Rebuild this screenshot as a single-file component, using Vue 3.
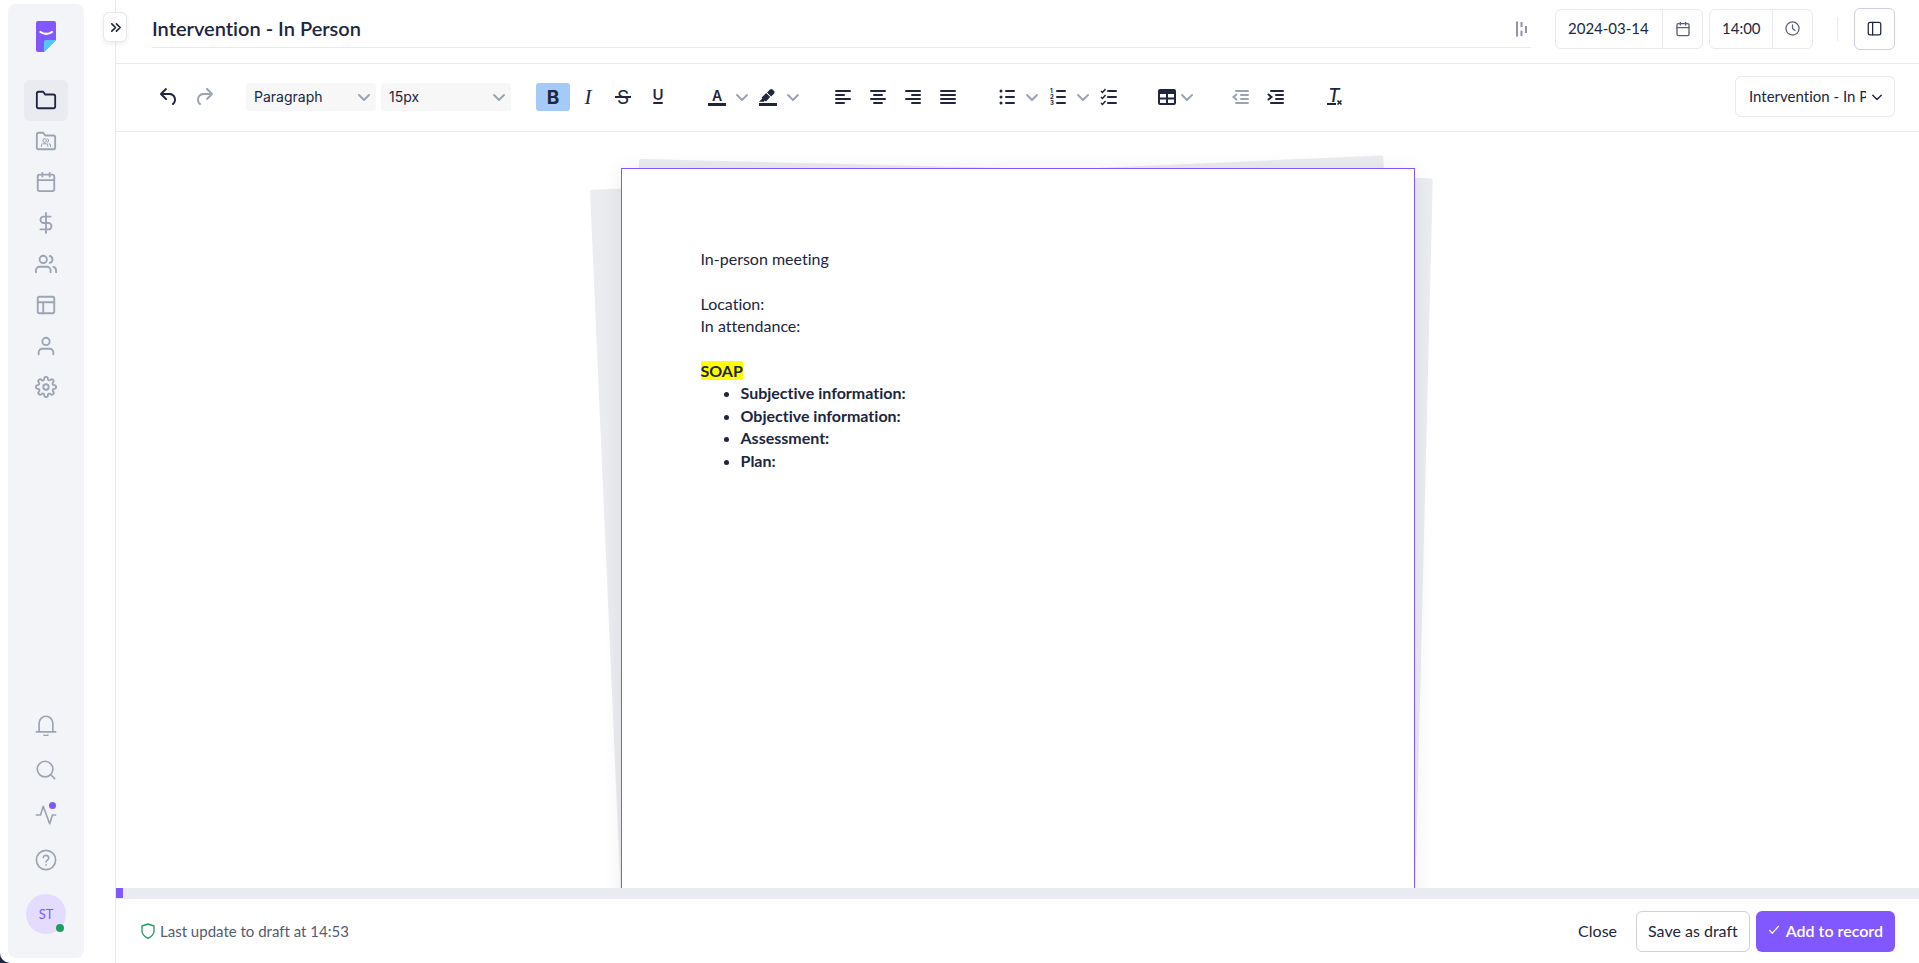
<script setup>
import { h, ref } from 'vue'

const bar = (x, y, w) => `<path d="M${x} ${y}h${w}" />`
const rows = (list) => `<g fill="none" stroke="currentColor" stroke-width="2" stroke-linecap="round">${list.map((r) => bar(...r)).join('')}</g>`

const icons = {
  folder: '<path d="M22 19a2 2 0 0 1-2 2H4a2 2 0 0 1-2-2V5a2 2 0 0 1 2-2h5l2 3h9a2 2 0 0 1 2 2z"/>',
  team: '<path d="M22 19a2 2 0 0 1-2 2H4a2 2 0 0 1-2-2V5a2 2 0 0 1 2-2h5l2 3h9a2 2 0 0 1 2 2z"/><g stroke-width="1.1"><circle cx="10.5" cy="11.5" r="1.9"/><path d="M7 18v-1a2 2 0 0 1 2-2h3a2 2 0 0 1 2 2v1M13.5 9.7a1.9 1.9 0 0 1 0 3.6M15.400 15a2 2 0 0 1 1.600 2v1"/></g>',
  calendar: '<rect x="3" y="4" width="18" height="18" rx="2"/><path d="M16 2v4M8 2v4M3 10h18"/>',
  dollar: '<path d="M12 1v22M17 5H9.500a3.500 3.500 0 0 0 0 7h5a3.500 3.500 0 0 1 0 7H6"/>',
  users: '<path d="M17 21v-2a4 4 0 0 0-4-4H5a4 4 0 0 0-4 4v2"/><circle cx="9" cy="7" r="4"/><path d="M23 21v-2a4 4 0 0 0-3-3.870M16 3.130a4 4 0 0 1 0 7.750"/>',
  layout: '<rect x="3" y="3" width="18" height="18" rx="2"/><path d="M3 9h18M9 21V9"/>',
  user: '<path d="M20 21v-2a4 4 0 0 0-4-4H8a4 4 0 0 0-4 4v2"/><circle cx="12" cy="7" r="4"/>',
  gear: '<circle cx="12" cy="12" r="3"/><path d="M19.400 15a1.650 1.650 0 0 0 .33 1.820l.06.06a2 2 0 0 1-2.830 2.830l-.06-.06a1.650 1.650 0 0 0-2.800 1.180V21a2 2 0 0 1-4 0v-.09A1.650 1.650 0 0 0 7.180 19.730l-.06.06a2 2 0 0 1-2.830-2.830l.06-.06A1.650 1.650 0 0 0 3.090 14H3a2 2 0 0 1 0-4h.09A1.650 1.650 0 0 0 4.270 7.180l-.06-.06a2 2 0 0 1 2.830-2.830l.06.06A1.650 1.650 0 0 0 10 3.090V3a2 2 0 0 1 4 0v.09a1.650 1.650 0 0 0 2.820 1.180l.06-.06a2 2 0 0 1 2.830 2.830l-.06.06A1.650 1.650 0 0 0 20.910 10H21a2 2 0 0 1 0 4h-.09a1.650 1.650 0 0 0-1.510 1z"/>',
  bell: '<path d="M1.500 19.500h21M4.500 19.500V10a7.500 7.500 0 0 1 15 0v9.500M10 23c1 .7 3 .7 4 0"/>',
  search: '<circle cx="11" cy="11" r="8.500"/><path d="m21.500 21.500-4.300-4.300"/>',
  activity: '<path d="M22.500 12H19l-3 9.500L9 2.500 6 12H1.500"/>',
  help: '<circle cx="12" cy="12" r="10.500"/><path d="M9 9.200a3 3 0 0 1 5.900 1c0 2-2.900 2.400-2.900 4M12 17.300v.2"/>',
  chevron: '<path d="m2 5 5 5 5-5"/>',
  double: '<path d="m3 3 4 4-4 4M8 3l4 4-4 4"/>',
  clock: '<circle cx="12" cy="12" r="10.500"/><path d="M12 6v6l4 3"/>',
  panel: '<rect x="2" y="2" width="20" height="20" rx="3"/><path d="M9 2v20"/>',
  shield: '<path d="M12 1.500 21 4.500v8c0 5-4 8-9 10.500-5-2.500-9-5.500-9-10.500v-8z"/>',
  check: '<path d="m2 8 3.500 3.500L13 3"/>'
}

const glyphs = {
  undo: '<path d="M6.400 8H12c3.700 0 6.200 2 6.800 5.100.6 2.700-.4 5.600-2.300 6.800a1 1 0 0 1-1-1.800c1.100-.6 1.800-2.700 1.400-4.600-.5-2.100-2.100-3.500-4.900-3.500H6.400l3.300 3.300a1 1 0 1 1-1.400 1.400l-5-5a1 1 0 0 1 0-1.400l5-5a1 1 0 0 1 1.400 1.400L6.400 8Z"/>',
  redo: '<path d="M17.600 10H12c-2.800 0-4.400 1.400-4.900 3.500-.4 2 .3 4 1.400 4.600a1 1 0 1 1-1 1.800c-2-1.200-2.900-4.100-2.300-6.800.6-3 3-5.100 6.800-5.100h5.600l-3.300-3.300a1 1 0 1 1 1.400-1.400l5 5a1 1 0 0 1 0 1.400l-5 5a1 1 0 0 1-1.400-1.400l3.300-3.300Z"/>',
  bold: '<text x="12" y="19" text-anchor="middle" font-family="Inter, sans-serif" font-size="19" font-weight="700">B</text>',
  italic: '<text x="12" y="19" text-anchor="middle" font-family="Liberation Serif, serif" font-size="21" font-style="italic">I</text>',
  strike: '<text x="12" y="19" text-anchor="middle" font-family="Inter, sans-serif" font-size="19">S</text><path d="M4 11h16v2H4z"/>',
  underline: '<text x="12" y="15" text-anchor="middle" font-family="Inter, sans-serif" font-size="15" font-weight="600">U</text><rect x="7" y="17" width="10" height="2" rx="1"/>',
  color: '<text x="12" y="16" text-anchor="middle" font-family="Inter, sans-serif" font-size="14" font-weight="600">A</text><path d="M3 18h18v3H3z"/>',
  marker: '<path d="M3 18h18v3H3zM7.700 16.700H3l3.300-3.300-.7-.8L10.200 8l4 4.100-4 4.200c-.2.200-.6.200-.8 0l-.6-.7-1.100 1.100zm5-7.500L11 7.400l3-2.900a2 2 0 0 1 2.600 0L18 6c.7.700.7 2 0 2.700l-2.900 2.900-1.800-1.800-.5-.6"/>',
  left: rows([[5, 6, 14], [5, 10, 8], [5, 14, 14], [5, 18, 8]]),
  center: rows([[5, 6, 14], [8, 10, 8], [5, 14, 14], [8, 18, 8]]),
  right: rows([[5, 6, 14], [11, 10, 8], [5, 14, 14], [11, 18, 8]]),
  justify: rows([[5, 6, 14], [5, 10, 14], [5, 14, 14], [5, 18, 14]]),
  bullets: rows([[11, 6, 8], [11, 12, 8], [11, 18, 8]]) + '<circle cx="6" cy="6" r="1.500"/><circle cx="6" cy="12" r="1.500"/><circle cx="6" cy="18" r="1.500"/>',
  numbers: rows([[11, 6, 8], [11, 12, 8], [11, 18, 8]]) + '<g font-family="Inter, sans-serif" font-size="6" font-weight="700"><text x="4" y="8">1</text><text x="4" y="14">2</text><text x="4" y="20">3</text></g>',
  checks: rows([[11, 6, 8], [11, 12, 8], [11, 18, 8]]) + '<path d="m4 6 1.500 1.500L8.500 4M4 12l1.500 1.500L8.500 10M4 18l1.500 1.500L8.500 16" fill="none" stroke="currentColor" stroke-width="1.500"/>',
  table: '<path fill-rule="evenodd" d="M5 4h14a2 2 0 0 1 2 2v12a2 2 0 0 1-2 2H5a2 2 0 0 1-2-2V6c0-1.100.9-2 2-2ZM5 9v3.500h6V9ZM13 9v3.500h6V9ZM5 14.500V18h6v-3.500ZM13 14.500V18h6v-3.500Z"/>',
  outdent: rows([[7, 6, 12], [12, 10, 7], [12, 14, 7], [7, 18, 12]]) + '<path d="M7.500 9.500 4.500 12l3 2.500" fill="none" stroke="currentColor" stroke-width="2" stroke-linecap="round"/>',
  indent: rows([[7, 6, 12], [12, 10, 7], [12, 14, 7], [7, 18, 12]]) + '<path d="m4.500 9.500 3 2.500-3 2.500" fill="none" stroke="currentColor" stroke-width="2" stroke-linecap="round"/>',
  clear: '<text x="5" y="17" font-family="Inter, sans-serif" font-size="18" font-style="italic" font-weight="500">T</text><path d="M4 18h9v2H4z"/><path d="m14.500 15.500 4 4m0-4-4 4" fill="none" stroke="currentColor" stroke-width="1.600"/>'
}

const Icon = (props) =>
  h('svg', {
    class: 'icon',
    viewBox: `0 0 ${props.box || 24} ${props.box || 24}`,
    width: props.size || 22,
    height: props.size || 22,
    'stroke-width': props.weight || 2,
    'aria-hidden': 'true',
    innerHTML: icons[props.name]
  })
Icon.props = ['name', 'size', 'box', 'weight']

const Glyph = (props) =>
  h('svg', { class: 'glyph', viewBox: '0 0 24 24', width: 24, height: 24, 'aria-hidden': 'true', innerHTML: glyphs[props.name] })
Glyph.props = ['name']

const nav = [
  ['folder', 'Records'], ['team', 'Shared records'], ['calendar', 'Calendar'], ['dollar', 'Billing'],
  ['users', 'Contacts'], ['layout', 'Templates'], ['user', 'Profile'], ['gear', 'Settings']
]
const tools = [['bell', 'Notifications'], ['search', 'Search'], ['activity', 'Activity'], ['help', 'Help']]

const groups = [
  [['bold', 'Bold'], ['italic', 'Italic'], ['strike', 'Strikethrough'], ['underline', 'Underline']],
  [['color', 'Text color', true], ['marker', 'Highlight color', true]],
  [['left', 'Align left'], ['center', 'Align center'], ['right', 'Align right'], ['justify', 'Justify']],
  [['bullets', 'Bullet list', true], ['numbers', 'Numbered list', true], ['checks', 'Checklist']],
  [['table', 'Table', true]],
  [['outdent', 'Decrease indent'], ['indent', 'Increase indent']],
  [['clear', 'Clear formatting']]
]

const title = ref('Intervention - In Person')
const date = ref('2024-03-14')
const time = ref('14:00')
const progress = ref(7)
const fields = ['Subjective information:', 'Objective information:', 'Assessment:', 'Plan:']
</script>

<template>
  <div class="app">
    <aside class="rail">
      <nav class="sidebar" aria-label="Main">
        <a href="#" class="logo" aria-label="Home">
          <svg width="20" height="31" viewBox="0 0 20 31" aria-hidden="true">
            <path d="M2 0h16a2 2 0 0 1 2 2v17L8 31H2a2 2 0 0 1-2-2V2a2 2 0 0 1 2-2z" fill="#8158ff" />
            <path d="M8 31V21a2 2 0 0 1 2-2h10z" fill="#4fc8fa" />
            <path d="M4.500 11c3 2.500 8.500 2.500 11.500 0" fill="none" stroke="#fff" stroke-width="2.200" stroke-linecap="round" />
          </svg>
        </a>
        <a v-for="([name, label], i) in nav" :key="name" href="#" class="nav-item" :class="{ active: i === 0 }" :aria-label="label">
          <Icon :name="name" />
        </a>
        <div class="rail-tools">
          <a v-for="[name, label] in tools" :key="name" href="#" class="tool-item" :aria-label="label">
            <Icon :name="name" weight="1.8" />
            <span v-if="name === 'activity'" class="news"></span>
          </a>
          <button class="avatar" type="button">ST<span class="online"></span></button>
        </div>
      </nav>
    </aside>

    <main class="main">
      <button class="expand" type="button" aria-label="Expand menu"><Icon name="double" size="13" box="14" weight="1.8" /></button>

      <header class="header">
        <div class="title-field">
          <input v-model="title" class="title" aria-label="Title" />
          <svg class="bars" width="12" height="16" viewBox="0 0 12 16" aria-hidden="true">
            <path d="M1 .5v15M5.500 1v5M5.500 9.500v5.500M10 5v7" fill="none" stroke="currentColor" stroke-width="2" />
          </svg>
        </div>
        <div class="picker">
          <input v-model="date" class="date" aria-label="Date" />
          <button type="button" aria-label="Choose date"><Icon name="calendar" size="16" /></button>
        </div>
        <div class="picker">
          <input v-model="time" class="time" aria-label="Time" />
          <button type="button" aria-label="Choose time"><Icon name="clock" size="15" /></button>
        </div>
        <span class="rule"></span>
        <button class="panel" type="button" aria-label="Toggle panel"><Icon name="panel" size="15" /></button>
      </header>

      <div class="toolbar" role="toolbar" aria-label="Formatting">
        <div class="group">
          <button class="tb" type="button" aria-label="Undo"><Glyph name="undo" /></button>
          <button class="tb muted" type="button" aria-label="Redo"><Glyph name="redo" /></button>
        </div>
        <div class="group choices">
          <div class="choice">
            <select aria-label="Block format"><option>Paragraph</option></select>
            <Icon name="chevron" size="14" box="14" />
          </div>
          <div class="choice">
            <select aria-label="Font size"><option>15px</option></select>
            <Icon name="chevron" size="14" box="14" />
          </div>
        </div>
        <div v-for="(group, g) in groups" :key="g" class="group">
          <template v-for="[name, label, menu] in group" :key="name">
            <span v-if="menu" class="split" :class="{ tight: name === 'table' }">
              <button class="tb" type="button" :aria-label="label"><Glyph :name="name" /></button>
              <button class="more" type="button" :aria-label="label + ' options'"><Icon name="chevron" size="14" box="14" /></button>
            </span>
            <button v-else class="tb" :class="{ on: name === 'bold', muted: name === 'outdent' }" type="button" :aria-label="label">
              <Glyph :name="name" />
            </button>
          </template>
        </div>
        <div class="template">
          <select aria-label="Template"><option>Intervention - In Person</option></select>
          <Icon name="chevron" size="12" box="14" weight="1.6" />
        </div>
      </div>

      <section class="canvas">
        <div class="stack">
          <div class="sheet behind tilt-right"></div>
          <div class="sheet behind tilt-left"></div>
          <article class="sheet page" contenteditable="true" spellcheck="false" aria-label="Document">
            <p>In-person meeting</p>
            <p><br /></p>
            <p>Location:</p>
            <p>In attendance:</p>
            <p><br /></p>
            <p><strong><mark>SOAP</mark></strong></p>
            <ul>
              <li v-for="field in fields" :key="field">{{ field }}</li>
            </ul>
          </article>
        </div>
      </section>

      <div class="progress"><div class="done" :style="{ width: progress + 'px' }"></div></div>

      <footer class="footer">
        <Icon name="shield" class="shield" size="16" />
        <span class="status">Last update to draft at 14:53</span>
        <button class="btn plain" type="button">Close</button>
        <button class="btn outline" type="button">Save as draft</button>
        <button class="btn primary" type="button"><Icon name="check" size="12" box="15" weight="1.6" />Add to record</button>
      </footer>
    </main>
  </div>
</template>

<style>
html {
  background: #20263f;
}
</style>

<style scoped>
.app {
  display: flex;
  height: 100vh;
  overflow: hidden;
  background: #fff;
  border-bottom-left-radius: 10px;
  color: #20263f;
  font-family: Lato, "Liberation Sans", sans-serif;
  font-size: 15px;
  font-variant-ligatures: none;
}
button, input, select {
  font: inherit;
  font-variant-ligatures: none;
  color: inherit;
  background: none;
  border: 0;
  margin: 0;
  padding: 0;
  outline: 0;
}
.icon {
  display: block;
  flex: none;
  fill: none;
  stroke: currentColor;
  stroke-linecap: round;
  stroke-linejoin: round;
}
.glyph {
  display: block;
  fill: currentColor;
}
.rail {
  flex: none;
  display: flex;
  width: 115px;
  box-sizing: border-box;
  padding: 4px 31px 5px 8px;
}
.sidebar {
  flex: 1;
  display: flex;
  flex-direction: column;
  align-items: center;
  background: #f2f4f8;
  border-radius: 8px;
}
.logo {
  height: 59px;
  padding-top: 17px;
}
.nav-item, .tool-item {
  position: relative;
  display: flex;
  align-items: center;
  justify-content: center;
  box-sizing: border-box;
  width: 44px;
  height: 41px;
  padding-bottom: 2px;
  border-radius: 6px;
  color: #9ca3b3;
}
.nav-item.active {
  background: #e9ebf0;
  color: #20263f;
}
.rail-tools {
  margin-top: auto;
  display: flex;
  flex-direction: column;
  align-items: center;
  padding-bottom: 24px;
}
.tool-item {
  height: 45px;
  padding: 0;
}
.news {
  position: absolute;
  top: 10px;
  right: 12px;
  width: 7px;
  height: 7px;
  border-radius: 50%;
  background: #8158ff;
}
.avatar {
  position: relative;
  width: 40px;
  height: 40px;
  margin-top: 12px;
  border-radius: 50%;
  background: #e3dcff;
  color: #8158ff;
  font-size: 13px;
}
.online {
  position: absolute;
  right: 2px;
  bottom: 2px;
  width: 8px;
  height: 8px;
  border-radius: 50%;
  background: #1d9f5f;
}
.main {
  position: relative;
  flex: 1;
  min-width: 0;
  display: flex;
  flex-direction: column;
  border-left: 1px solid #e9e9ee;
}
.expand {
  position: absolute;
  left: -13px;
  top: 12px;
  display: grid;
  place-items: center;
  width: 24px;
  height: 30px;
  background: #fff;
  border: 1px solid #e6e8ee;
  border-radius: 6px;
  box-shadow: 0 2px 4px rgba(32, 38, 63, .08);
}
.header {
  flex: none;
  display: flex;
  align-items: center;
  height: 63px;
  box-sizing: border-box;
  padding: 0 24px 6px 36px;
}
.title-field {
  flex: 1;
  display: flex;
  align-items: center;
  align-self: flex-start;
  box-sizing: border-box;
  height: 48px;
  padding: 8px 3px 0 0;
  margin-right: 24px;
  border-bottom: 1px solid #e9e9ee;
}
.title {
  flex: 1;
  min-width: 0;
  font-size: 20px;
  font-weight: 600;
}
.bars {
  margin-top: 2px;
  color: #8f94a6;
}
.picker {
  display: flex;
  height: 40px;
  box-sizing: border-box;
  margin-right: 6px;
  border: 1px solid #e9e9ee;
  border-radius: 6px;
}
.picker input {
  box-sizing: border-box;
  padding: 0 0 2px 12px;
}
.date {
  width: 106px;
}
.time {
  width: 62px;
}
.picker button {
  display: grid;
  place-items: center;
  width: 40px;
  border-left: 1px solid #e9e9ee;
  color: #5a6075;
}
.rule {
  width: 1px;
  height: 24px;
  margin: 0 16px 0 18px;
  background: #e9e9ee;
}
.panel {
  display: grid;
  place-items: center;
  width: 41px;
  height: 42px;
  border: 1px solid #cfd1da;
  border-radius: 6px;
}
.toolbar {
  flex: none;
  display: flex;
  align-items: center;
  gap: 25px;
  height: 69px;
  box-sizing: border-box;
  padding: 0 24px 2px 36px;
  border-top: 1px solid #e9e9ee;
  border-bottom: 1px solid #e9e9ee;
}
.group {
  display: flex;
  gap: 1px;
}
.choices {
  gap: 5px;
}
.tb {
  display: grid;
  place-items: center;
  width: 34px;
  height: 28px;
  border-radius: 3px;
}
.on {
  background: #a6caf7;
}
.muted {
  color: #9ca3b3;
}
.split {
  display: flex;
}
.more {
  display: grid;
  place-items: center;
  width: 16px;
  color: #9ca3b3;
}
.tight .tb {
  width: 32px;
}
.tight .more {
  margin: 0 4px 0 -4px;
}
.choice, .template {
  position: relative;
  display: flex;
  align-items: center;
}
.choice select {
  width: 130px;
  height: 28px;
  padding: 0 26px 0 8px;
  border-radius: 3px;
  background: #f7f7f8;
  font-family: Inter, sans-serif;
  font-size: 14px;
  appearance: none;
}
.choice .icon {
  position: absolute;
  right: 5px;
  color: #9ca3b3;
  pointer-events: none;
}
.template {
  margin-left: auto;
}
.template select {
  width: 160px;
  height: 41px;
  padding: 0 28px 2px 13px;
  border: 1px solid #e9e9ee;
  border-radius: 6px;
  text-overflow: clip;
  appearance: none;
}
.template .icon {
  position: absolute;
  right: 12px;
  pointer-events: none;
}
.canvas {
  flex: 1;
  min-height: 0;
  overflow: hidden;
}
.stack {
  position: relative;
  width: 794px;
  margin: 36px auto 0;
}
.sheet {
  box-sizing: border-box;
  width: 794px;
  min-height: 1123px;
}
.behind {
  position: absolute;
  border-radius: 3px;
  background: #ebecf0;
  transform-origin: 0 0;
}
.tilt-left {
  left: -31px;
  top: 22px;
  transform: rotate(-2.500deg);
}
.tilt-right {
  left: 18px;
  top: -9px;
  transform: rotate(1.400deg);
}
.page {
  position: relative;
  padding: 79px;
  background: #fff;
  border: 1px solid #8158ff;
  box-shadow: 0 2px 20px rgba(0, 0, 0, .08);
  font-size: 16px;
  line-height: 1.4;
  outline: 0;
}
.page p, .page ul {
  margin: 0;
}
.page ul {
  padding-left: 40px;
  font-weight: 700;
}
mark {
  background: #ff0;
  color: inherit;
}
.progress {
  flex: none;
  height: 11px;
  background: #e9ebf0;
}
.done {
  height: 10px;
  background: #8158ff;
}
.footer {
  flex: none;
  display: flex;
  align-items: center;
  height: 64px;
  padding: 0 24px;
}
.shield {
  color: #1d9f5f;
}
.status {
  margin: 0 auto 0 4px;
  color: #565b70;
}
.btn {
  height: 41px;
  padding: 0 11px 2px;
  border-radius: 6px;
  font-size: 16px;
}
.plain {
  padding: 0 19px 2px;
}
.outline {
  border: 1px solid #cfd1da;
}
.primary {
  display: flex;
  align-items: center;
  gap: 6px;
  margin-left: 6px;
  padding: 0 12px 2px;
  background: #8158ff;
  color: #fff;
  font-weight: 600;
}
</style>
